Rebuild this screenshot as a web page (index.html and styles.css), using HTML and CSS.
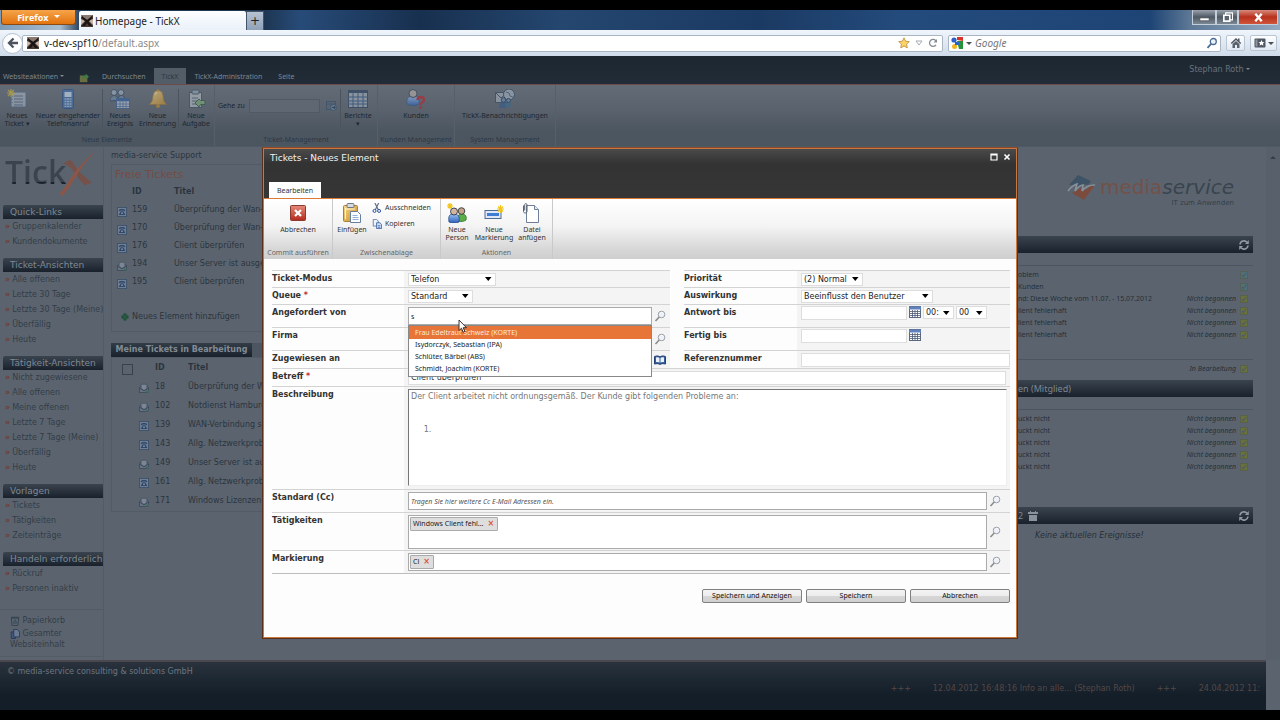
FILE: index.html
```html
<!DOCTYPE html>
<html lang="de">
<head>
<meta charset="utf-8">
<title>Homepage - TickX</title>
<link rel="stylesheet" href="styles.css">
</head>
<body>
<svg class="defs" aria-hidden="true">
  <defs>
    <linearGradient id="gGold" x1="0" y1="0" x2="1" y2="1"><stop offset="0" stop-color="#f6d888"/><stop offset="1" stop-color="#c88b26"/></linearGradient>
    <linearGradient id="gBlue" x1="0" y1="0" x2="0" y2="1"><stop offset="0" stop-color="#9cc3f2"/><stop offset="1" stop-color="#2b5fb8"/></linearGradient>
    <linearGradient id="gRed" x1="0" y1="0" x2="0" y2="1"><stop offset="0" stop-color="#e58a7c"/><stop offset="1" stop-color="#b42a1c"/></linearGradient>
  </defs>
  <symbol id="fav" viewBox="0 0 12 12"><rect width="12" height="12" fill="#4a3a34"/><path d="M0 0h12L7 5 0 2z" fill="#8a7a72"/><path d="M0 4l4 2-4 4zM12 4L8 6l4 4z" fill="#c9b5aa"/><path d="M1 1l5 4 5-4v2L7.500 6.500 11 11H8L6 8l-2 3H1l3.500-4.500L1 3z" fill="#1a1414"/></symbol>
  <symbol id="star" viewBox="0 0 12 12"><path d="M6 .8l1.6 3.4 3.7.4-2.8 2.5.8 3.8L6 9 2.700 10.900l.8-3.800L.7 4.600l3.700-.4z" fill="#fbd469" stroke="#c29345" stroke-width=".9"/></symbol>
  <symbol id="reload" viewBox="0 0 10 10"><path d="M8 6.800A3.500 3.500 0 1 1 8 3" fill="none" stroke="#858b93" stroke-width="1.300"/><path d="M9 1v3.500H5.500z" fill="#858b93"/></symbol>
  <symbol id="lens" viewBox="0 0 12 12"><circle cx="7.300" cy="4.500" r="3" fill="#eaf2fa" stroke="#4a6c94" stroke-width="1.300"/><path d="M5 7L1.500 10.800" stroke="#4a6c94" stroke-width="1.800"/></symbol>
  <symbol id="mag" viewBox="0 0 12 12"><circle cx="7.500" cy="4.500" r="3.300" fill="#eef1f8" stroke="#9aa0a8"/><path d="M9.500 3.500a2 2 0 0 0-2-1.200" fill="none" stroke="#fff"/><path d="M5.200 7L1.500 11" stroke="#8b8b8b" stroke-width="1.600"/></symbol>
  <symbol id="home" viewBox="0 0 12 12"><path d="M6 1L.8 6l1 .9L6 3l4.200 3.900 1-.9-1.700-1.600V1.600H8v1.300z" fill="#4d545e"/><path d="M2.500 7L6 3.900 9.500 7v4H7V8H5v3H2.500z" fill="#5b636e"/></symbol>
  <symbol id="marks" viewBox="0 0 12 12"><rect x=".5" y="1.500" width="11" height="9" rx="1" fill="#4f5763"/><rect x="1.500" y="2.500" width="2" height="7" fill="#8b94a0"/><path d="M7.500 3l.9 2 2.100.2-1.600 1.400.5 2.100-1.900-1.100-1.900 1.100.5-2.100-1.600-1.400 2.100-.2z" fill="#fff"/></symbol>
  <symbol id="newticket" viewBox="0 0 20 20"><rect x="4" y="3" width="15" height="15" fill="#aab4c0" stroke="#4d6788"/><path d="M7 7h9M7 10h9M7 13h9M7 16h9" stroke="#4d6788"/><path d="M5 7v1M5 10v1M5 13v1" stroke="#38679f"/><path d="M4 0v8M0 4h8M1 1l6 6M7 1L1 7" stroke="#d0b63a" stroke-width="1.200"/></symbol>
  <symbol id="mobile" viewBox="0 0 20 20"><rect x="4.500" y=".5" width="11" height="19" rx="1" fill="#3f6fae" stroke="#274f87"/><rect x="6.500" y="3" width="7" height="5" fill="#cfe2f7"/><path d="M6.500 10h7M6.500 12.500h7M6.500 15h7M6.500 17.300h7" stroke="#a8c4e6" stroke-width="1.300" stroke-dasharray="2 .5"/></symbol>
  <symbol id="event" viewBox="0 0 20 20"><circle cx="4" cy="3.500" r="3" fill="#9fb0c4" stroke="#30445e"/><circle cx="11" cy="3.500" r="3" fill="#9fb0c4" stroke="#30445e"/><path d="M0 12c0-7 8-7 8-1 0-6 7-6 7 0z" fill="#6f88a5" stroke="#30445e"/><rect x="6.500" y="9.500" width="13" height="10" fill="#bec8d3" stroke="#3b6299"/><path d="M6.500 11h13" stroke="#2f62a5" stroke-width="2.500"/><path d="M7 15h12M7 17.500h12M10 12v7M13 12v7M16 12v7" stroke="#4d70ac" stroke-width=".8"/></symbol>
  <symbol id="bell" viewBox="0 0 20 20"><path d="M10 1.500c-5 0-5 5-5.500 9-.3 2-1.500 3-3 5h17c-1.500-2-2.700-3-3-5-.5-4-.5-9-5.500-9z" fill="url(#gGold)" stroke="#a3782f" stroke-width=".8"/><circle cx="10" cy="17" r="2" fill="#c28b2d"/><circle cx="10" cy="1.500" r="1.300" fill="#c28b2d"/><path d="M7 6c.5-2 1.500-2.500 2.500-2.500" stroke="#fdf0c8" fill="none"/></symbol>
  <symbol id="task" viewBox="0 0 20 20"><rect x="3.500" y="3.500" width="12" height="15" fill="#b6bdc5" stroke="#3c5164"/><rect x="6" y="1" width="7" height="4" rx="1" fill="#97a7b6" stroke="#3c5164"/><path d="M6 9h6M6 12h5M6 15h4" stroke="#4d6174"/><path d="M9 14l4 4 1.500-2.500h4.500v-4h-4.500L13 10z" fill="#7fae7c" stroke="#325c3c"/></symbol>
  <symbol id="goto" viewBox="0 0 12 12"><rect x=".5" y="1.500" width="9" height="8" fill="none" stroke="#40566f"/><path d="M.5 4h9" stroke="#40566f"/><circle cx="7.500" cy="7.500" r="3" fill="#69798c" stroke="#40566f"/><path d="M6 7.500h3M7.800 6l1.500 1.500L7.800 9" stroke="#34465c" fill="none"/></symbol>
  <symbol id="grid" viewBox="0 0 20 20"><rect x=".5" y="1.500" width="19" height="17" fill="#a8b0b9" stroke="#293f5e"/><path d="M.5 3h19" stroke="#293f5e" stroke-width="2"/><path d="M5 3v15M10 3v15M15 3v15M0 8h20M0 12h20M0 15h20" stroke="#2d5589"/></symbol>
  <symbol id="kunde" viewBox="0 0 20 20"><path d="M1 15c-1-7 3-8 6-8s7 1 6 8c-3 2-9 2-12 0z" fill="url(#gBlue)" stroke="#2d5183" stroke-width=".7"/><circle cx="7" cy="4.500" r="4" fill="#b9b0ab" stroke="#2b3d57"/><path d="M11.500 11c0-4 6.500-4 6.500 0 0 3-3.500 2-3.500 5" fill="none" stroke="#c2212d" stroke-width="2.300"/><circle cx="14.500" cy="18.500" r="1.400" fill="#c2212d"/></symbol>
  <symbol id="notif" viewBox="0 0 20 20"><rect x=".5" y="3.500" width="12" height="10" fill="#a5afba" stroke="#35485f"/><path d="M.5 3.500L6 9l6-5.500" fill="none" stroke="#35485f"/><circle cx="14" cy="5.500" r="5.500" fill="#a5b2c0" stroke="#26415e"/><path d="M11 3l3 1 1 3 3 1" fill="none" stroke="#46617e"/><path d="M4 19c0-5 2-6 4-6s4 1 4 6z" fill="#335b8c"/><circle cx="8.500" cy="11" r="2.300" fill="#6e8eb3" stroke="#1e3c60"/><path d="M10 18c0-4 1.500-5 3.500-5s3.500 1 3.500 5z" fill="#3e6b8a"/><circle cx="13.500" cy="11.500" r="2" fill="#6e8eb3" stroke="#1e3c60"/></symbol>
  <symbol id="cancel" viewBox="0 0 20 20"><rect x="2.500" y="2.500" width="15" height="15" rx="1" fill="url(#gRed)" stroke="#8a3b31"/><path d="M7 7l6 6M13 7l-6 6" stroke="#fff" stroke-width="2.200"/></symbol>
  <symbol id="paste" viewBox="0 0 20 20"><rect x="1.500" y="2.500" width="14" height="16" rx="1" fill="url(#gGold)" stroke="#ad812b"/><rect x="5" y=".5" width="7" height="4" rx="1" fill="#d8dce2" stroke="#707784"/><path d="M3.500 5v11M3 6h10" stroke="#fff5d5"/><path d="M8.500 8.500h7l3 3v8h-10z" fill="#fff" stroke="#66809f"/><path d="M10.500 12.500h5M10.500 14.500h6M10.500 16.500h6" stroke="#8fb0d8"/></symbol>
  <symbol id="cut" viewBox="0 0 12 12"><path d="M3.500 0l4 8M8 0L4 8" stroke="#5f6f86" stroke-width="1.400"/><circle cx="3" cy="9.500" r="1.800" fill="none" stroke="#27519a" stroke-width="1.200"/><circle cx="8.500" cy="9.500" r="1.800" fill="none" stroke="#27519a" stroke-width="1.200"/></symbol>
  <symbol id="copy" viewBox="0 0 12 12"><path d="M1.500.5h4l2 2v6h-6z" fill="#eef4fc" stroke="#5572a0"/><path d="M5.500 4.500h4l2 2v5h-6z" fill="#cfe0f6" stroke="#3b5f9b"/><path d="M7 8h3M7 10h3" stroke="#3b6ec0"/></symbol>
  <symbol id="person" viewBox="0 0 20 20"><path d="M11 18c-1-6 1-7 4-7s5 2 4 6c-2 1.500-5 2-8 1z" fill="#5cae47" stroke="#2c6e28" stroke-width=".8"/><circle cx="14.500" cy="8" r="3.300" fill="#c9a088" stroke="#3e4b43"/><path d="M2 19c-1-7 1-8 5-8s6 2 5 8c-3 1.300-7 1.300-10 0z" fill="url(#gBlue)" stroke="#23488a" stroke-width=".8"/><circle cx="7" cy="8.500" r="3.500" fill="#d7b49d" stroke="#39475d"/><path d="M3 0v6M0 3h6M1 1l4 4M5 1L1 5" stroke="#f0c419" stroke-width="1.200"/></symbol>
  <symbol id="marking" viewBox="0 0 20 20"><rect x="1" y="7.500" width="16" height="8" fill="#dfe8f4" stroke="#4f6c93"/><rect x="3" y="10" width="12" height="3" fill="#3e7dd6"/><path d="M16.500 2v8M13 6h7M14 3.500l5 5M19 3.500l-5 5" stroke="#f0c419" stroke-width="1.200"/></symbol>
  <symbol id="file" viewBox="0 0 20 20"><path d="M4.500 2.500h8l4 4v13h-12z" fill="#fff" stroke="#6f809b"/><path d="M12.500 2.500v4h4" fill="#e1e9f4" stroke="#6f809b"/><path d="M1.500 2.500v6c0 2 3.500 2 3.500 0V2c0-2-2.300-2-2.300 0v5.500" fill="none" stroke="#58606b"/></symbol>
  <symbol id="rphone" viewBox="0 0 12 12"><rect x=".5" y=".5" width="11" height="11" fill="#77889d" stroke="#31486a"/><path d="M2 4c1-2 7-2 8 0l-1 1.200-1.500-1h-3L3 5.200z" fill="#203e6b"/><path d="M4.500 5h3L10 9.500H2z" fill="#203e6b"/><circle cx="6" cy="7.400" r="1.100" fill="#8fa2bb"/></symbol>
  <symbol id="rmail" viewBox="0 0 12 12"><path d="M.5 5.500L3 3.500h6l2.500 2v6H.5z" fill="#6b7988" stroke="#2c3c54"/><path d="M2.500 1.500h7v5L6 9 2.500 6.500z" fill="#87929e" stroke="#34445a" stroke-width=".8"/><path d="M.5 6L6 9.500 11.500 6" fill="none" stroke="#2c3c54"/><path d="M8 9h4v2.500H8z" fill="#3f6a5f"/></symbol>
  <symbol id="cal" viewBox="0 0 12 12"><rect x=".5" y=".5" width="11" height="11" fill="#fff" stroke="#5b6a80"/><path d="M0 2h12" stroke="#5f82bd" stroke-width="3"/><path d="M1 5.500h10M1 7.500h10M1 9.500h10M3.500 4v7.500M6 4v7.500M8.500 4v7.500" stroke="#4a5a73" stroke-width=".8"/></symbol>
  <symbol id="book" viewBox="0 0 12 12"><path d="M.5 2.500C3 1.500 5 2 6 3c1-1 3-1.500 5.500-.5v7.500C9 9.500 7 9.500 6 10.500 5 9.500 3 9.500.5 10z" fill="#355e9d" stroke="#1f3e72"/><path d="M2 3.500c1.500-.5 3 0 3.500.5v4.500c-1-.7-2.500-.7-3.500-.5zM10 3.500c-1.500-.5-3 0-3.500.5v4.500c1-.7 2.500-.7 3.500-.5z" fill="#e9f1fb"/></symbol>
  <symbol id="bin" viewBox="0 0 12 12"><path d="M1.500 2.500h9l-1 9h-7z" fill="none" stroke="#2f3c4a"/><path d="M1 1.500h10" stroke="#2f3c4a"/><path d="M6 4.500L8 8.500H4z" fill="none" stroke="#2f4a5c"/></symbol>
  <symbol id="docs" viewBox="0 0 12 12"><path d="M1.500 3.500h5v8h-5z" fill="#44597a" stroke="#22355a"/><path d="M4.500.5h4l3 3v6h-7z" fill="#6a7a92" stroke="#22355a"/></symbol>
  <symbol id="sync" viewBox="0 0 12 12"><path d="M2 5.500A4 4 0 0 1 9 3.300M10 6.500A4 4 0 0 1 3 8.700" fill="none" stroke="#929aa3" stroke-width="1.600"/><path d="M10.800 1v4H7zM1.200 11V7H5z" fill="#929aa3"/></symbol>
  <symbol id="done" viewBox="0 0 10 10"><rect x=".5" y=".5" width="9" height="9" fill="currentColor" stroke="#56604d"/><path d="M2.500 5l1.500 2L8 2.500" fill="none" stroke="#4f5966" stroke-width="1.300"/></symbol>
  <symbol id="edit" viewBox="0 0 12 12"><rect x="1" y="3" width="9" height="8" fill="#8a8a45"/><path d="M3 8c0-4 3-5 5-5V1l4 3.500L8 8V5.500c-2 0-3 1-5 2.500z" fill="#4f9a4d"/></symbol>
  <symbol id="plus" viewBox="0 0 10 10"><path d="M3.500 1h3v2.500H9v3H6.500V9h-3V6.500H1v-3h2.500z" fill="#245a3f" stroke="#1b4434" stroke-width=".7"/></symbol>
  <symbol id="arrow" viewBox="0 0 8 8"><path d="M1 2h6.500L4.250 6z" fill="#000"/></symbol>
</svg>

<header class="browser">
  <div class="titlebar">
    <button class="firefox" type="button">Firefox <span class="caret"></span></button>
    <div class="tab"><svg class="i12"><use href="#fav"/></svg>Homepage - TickX</div>
    <button class="newtab" type="button" aria-label="Neuer Tab">+</button>
    <div class="winbtns">
      <button type="button" class="min" aria-label="Minimieren"><svg viewBox="0 0 12 12"><path d="M1 6.500h10v3H1z" fill="#fff" stroke="#4a5058" stroke-width=".7"/></svg></button>
      <button type="button" class="max" aria-label="Wiederherstellen"><svg viewBox="0 0 12 12"><path d="M4 1h7.500v7.500H4z" fill="none" stroke="#fff" stroke-width="1.300"/><path d="M2 3.500h6.500V10H2z" fill="#5b636e" stroke="#fff" stroke-width="1.800"/></svg></button>
      <button type="button" class="close" aria-label="Schließen"><svg viewBox="0 0 12 12"><path d="M2.500 2l7 8M9.500 2l-7 8" stroke="#fff" stroke-width="2.600"/></svg></button>
    </div>
  </div>
  <div class="navbar">
    <button class="back" type="button" aria-label="Zurück"><svg viewBox="0 0 14 14"><path d="M7.500 2.500L3 7l4.500 4.500M3.500 7H12" fill="none" stroke="#4b525c" stroke-width="2.300"/></svg></button>
    <div class="url" role="textbox" aria-label="Adresse">
      <svg class="i12"><use href="#fav"/></svg>
      <span class="addr">v-dev-spf10<span class="path">/default.aspx</span></span>
      <svg class="i12"><use href="#star"/></svg>
      <svg class="i8"><path d="M1 2h6L4 6z" fill="none" stroke="#a6abb2"/></svg>
      <svg class="i10"><use href="#reload"/></svg>
    </div>
    <div class="search">
      <svg class="i12" viewBox="0 0 12 12"><rect width="12" height="12" fill="#fff"/><path d="M6 0h6v4L6 3z" fill="#d9342b"/><path d="M6 4h6v8H8z" fill="#26913d"/><circle cx="3" cy="3" r="2.600" fill="#2b61c8"/><circle cx="3.500" cy="9.500" r="2.500" fill="#f0b51e"/><path d="M4 5h4v3H4z" fill="#2b61c8"/></svg>
      <span class="caret dark"></span>
      <input type="text" placeholder="Google" aria-label="Suche">
      <svg class="i12"><use href="#lens"/></svg>
    </div>
    <button class="tool" type="button" aria-label="Startseite"><svg class="i12"><use href="#home"/></svg></button>
    <button class="tool wide" type="button" aria-label="Lesezeichen"><svg class="i12"><use href="#marks"/></svg><span class="caret dark"></span></button>
  </div>
</header>

<div class="page">
  <div class="topbar">
    <button class="siteact" type="button">Websiteaktionen <span class="caret dim"></span></button>
    <svg class="i12"><use href="#edit"/></svg>
    <nav class="tabs"><a href="#">Durchsuchen</a><a href="#" class="on">TickX</a><a href="#">TickX-Administration</a><a href="#">Seite</a></nav>
    <button class="user" type="button">Stephan Roth <span class="caret dim"></span></button>
  </div>

  <div class="ribbon">
    <section class="group g1">
      <div class="tools">
        <button type="button" class="w34"><svg class="i20"><use href="#newticket"/></svg>Neues<br>Ticket ▾</button>
        <button type="button" class="w68 sep"><svg class="i20"><use href="#mobile"/></svg>Neuer eingehender<br>Telefonanruf</button>
        <button type="button" class="w34"><svg class="i20"><use href="#event"/></svg>Neues<br>Ereignis</button>
        <button type="button" class="w42 sep"><svg class="i20"><use href="#bell"/></svg>Neue<br>Erinnerung</button>
        <button type="button" class="w34"><svg class="i20"><use href="#task"/></svg>Neue<br>Aufgabe</button>
      </div>
      <h2>Neue Elemente</h2>
    </section>
    <section class="group g2">
      <div class="tools">
        <div class="goto sep"><label for="goto-id">Gehe zu</label><input id="goto-id" type="text"><svg class="i12"><use href="#goto"/></svg></div>
        <button type="button" class="w34"><svg class="i20"><use href="#grid"/></svg>Berichte<br>▾</button>
      </div>
      <h2>Ticket-Management</h2>
    </section>
    <section class="group g3">
      <div class="tools"><button type="button" class="w34"><svg class="i20"><use href="#kunde"/></svg>Kunden</button></div>
      <h2>Kunden Management</h2>
    </section>
    <section class="group g4">
      <div class="tools"><button type="button" class="w92"><svg class="i20"><use href="#notif"/></svg>TickX-Benachrichtigungen</button></div>
      <h2>System Management</h2>
    </section>
  </div>

  <div class="site">
    <nav class="side">
      <a class="tickx" href="#" aria-label="TickX"><span>Tick</span><svg viewBox="0 0 38 48"><path d="M11 9c3 3 5 7 8 11 5 5 9 9 15 13l-8 3c-4-4-7-8-10-13-4-5-8-9-13-10z" fill="#75514a"/><path d="M37 0c-5 7-11 12-15 19C16 28 11 38 3 47l-4-2c6-5 9-12 13-18C18 18 28 8 37 0z" fill="#8a564a"/></svg></a>
      <h3>Quick-Links</h3>
      <ul><li><a href="#">Gruppenkalender</a></li><li><a href="#">Kundendokumente</a></li></ul>
      <h3>Ticket-Ansichten</h3>
      <ul><li><a href="#">Alle offenen</a></li><li><a href="#">Letzte 30 Tage</a></li><li><a href="#">Letzte 30 Tage (Meine)</a></li><li><a href="#">Überfällig</a></li><li><a href="#">Heute</a></li></ul>
      <h3>Tätigkeit-Ansichten</h3>
      <ul><li><a href="#">Nicht zugewiesene</a></li><li><a href="#">Alle offenen</a></li><li><a href="#">Meine offenen</a></li><li><a href="#">Letzte 7 Tage</a></li><li><a href="#">Letzte 7 Tage (Meine)</a></li><li><a href="#">Überfällig</a></li><li><a href="#">Heute</a></li></ul>
      <h3>Vorlagen</h3>
      <ul><li><a href="#">Tickets</a></li><li><a href="#">Tätigkeiten</a></li><li><a href="#">Zeiteinträge</a></li></ul>
      <h3>Handeln erforderlich</h3>
      <ul><li><a href="#">Rückruf</a></li><li><a href="#">Personen inaktiv</a></li></ul>
      <div class="extra">
        <a href="#"><svg class="i10"><use href="#bin"/></svg> Papierkorb</a>
        <a href="#"><svg class="i10"><use href="#docs"/></svg> Gesamter<br>Websiteinhalt</a>
      </div>
    </nav>

    <main class="center">
      <p class="crumb">media-service Support</p>
      <section class="panel free">
        <h2>Freie Tickets</h2>
        <table>
          <tr><th></th><th>ID</th><th>Titel</th></tr>
          <tr><td><svg class="i10"><use href="#rphone"/></svg></td><td>159</td><td>Überprüfung der Wan-S</td></tr>
          <tr><td><svg class="i10"><use href="#rphone"/></svg></td><td>170</td><td>Überprüfung der Wan-S</td></tr>
          <tr><td><svg class="i10"><use href="#rphone"/></svg></td><td>176</td><td>Client überprüfen</td></tr>
          <tr><td><svg class="i10"><use href="#rmail"/></svg></td><td>194</td><td>Unser Server ist ausge</td></tr>
          <tr><td><svg class="i10"><use href="#rphone"/></svg></td><td>195</td><td>Client überprüfen</td></tr>
        </table>
        <a class="add" href="#"><svg class="i8"><use href="#plus"/></svg> Neues Element hinzufügen</a>
      </section>
      <div class="ptabs"><button type="button" class="ptab">Meine Tickets in Bearbeitung</button><span class="ptab off"></span></div>
      <section class="panel mine">
        <table>
          <tr><th><input type="checkbox" aria-label="Alle auswählen"></th><th></th><th>ID</th><th>Titel</th></tr>
          <tr><td></td><td><svg class="i10"><use href="#rmail"/></svg></td><td>18</td><td>Überprüfung der Wa</td></tr>
          <tr><td></td><td><svg class="i10"><use href="#rmail"/></svg></td><td>102</td><td>Notdienst Hamburg</td></tr>
          <tr><td></td><td><svg class="i10"><use href="#rphone"/></svg></td><td>139</td><td>WAN-Verbindung so</td></tr>
          <tr><td></td><td><svg class="i10"><use href="#rphone"/></svg></td><td>143</td><td>Allg. Netzwerkprobl</td></tr>
          <tr><td></td><td><svg class="i10"><use href="#rmail"/></svg></td><td>149</td><td>Unser Server ist au</td></tr>
          <tr><td></td><td><svg class="i10"><use href="#rphone"/></svg></td><td>161</td><td>Allg. Netzwerkprobl</td></tr>
          <tr><td></td><td><svg class="i10"><use href="#rmail"/></svg></td><td>171</td><td>Windows Lizenzen</td></tr>
        </table>
      </section>
    </main>

    <aside class="right">
      <div class="brand">
        <svg viewBox="0 0 30 26"><path d="M2 10L11 0l13 6-3 4-5-1-4 4-4-3z" fill="#3e5365"/><path d="M5 18l5-3 5-3 4 3 4-4 5-1-11 15z" fill="#7b4b3e"/><path d="M1 16c3-4 6-6 9-7l-2 7c3-4 5-6 8-6l-1 6c3-4 6-6 13-6" fill="none" stroke="#87919b" stroke-width="1.600"/></svg>
        <div><span class="name"><span>media</span><em>service</em></span><small>IT zum Anwenden</small></div>
      </div>
      <div class="bar"><span></span><svg class="i12"><use href="#sync"/></svg></div>
      <ul class="tasks">
        <li><span>oblem</span><svg class="i8 teal"><use href="#done"/></svg></li>
        <li><span>Kunden</span><svg class="i8 teal"><use href="#done"/></svg></li>
        <li><span>nd: Diese Woche vom 11.07. - 15.07.2012</span><em>Nicht begonnen</em><svg class="i8"><use href="#done"/></svg></li>
        <li><span>lient fehlerhaft</span><em>Nicht begonnen</em><svg class="i8"><use href="#done"/></svg></li>
        <li><span>lient fehlerhaft</span><em>Nicht begonnen</em><svg class="i8"><use href="#done"/></svg></li>
        <li><span>lient fehlerhaft</span><em>Nicht begonnen</em><svg class="i8"><use href="#done"/></svg></li>
      </ul>
      <ul class="tasks single"><li><span></span><em>In Bearbeitung</em><svg class="i8"><use href="#done"/></svg></li></ul>
      <div class="bar"><span>en (Mitglied)</span></div>
      <ul class="tasks">
        <li><span>uckt nicht</span><em>Nicht begonnen</em><svg class="i8"><use href="#done"/></svg></li>
        <li><span>uckt nicht</span><em>Nicht begonnen</em><svg class="i8"><use href="#done"/></svg></li>
        <li><span>uckt nicht</span><em>Nicht begonnen</em><svg class="i8"><use href="#done"/></svg></li>
        <li><span>uckt nicht</span><em>Nicht begonnen</em><svg class="i8"><use href="#done"/></svg></li>
        <li><span>uckt nicht</span><em>Nicht begonnen</em><svg class="i8"><use href="#done"/></svg></li>
      </ul>
      <div class="bar last"><span>2 <svg class="i10" viewBox="0 0 10 10"><path d="M0 1h2V0h1v1h4V0h1v1h2v2H0zM1 4h8v6H1z" fill="#8a929b"/></svg></span><svg class="i12"><use href="#sync"/></svg></div>
      <p class="none">Keine aktuellen Ereignisse!</p>
    </aside>
    <div class="scroll"><span class="caret up"></span></div>
  </div>

  <footer class="foot">
    <p>© media-service consulting &amp; solutions GmbH</p>
    <p class="ticker"><span>+++</span><span>12.04.2012 16:48:16 Info an alle... (Stephan Roth)</span><span>+++</span><span>24.04.2012 11:</span></p>
  </footer>

  <div class="overlay">
    <div class="dialog" role="dialog" aria-labelledby="dlg-title">
      <div class="dhead">
        <div class="dtitle"><h1 id="dlg-title">Tickets - Neues Element</h1>
          <button type="button" aria-label="Maximieren"><svg class="i8"><path d="M1 1h6v6H1zM1 2h6" fill="none" stroke="#fff" stroke-width="1.200"/></svg></button>
          <button type="button" aria-label="Schließen"><svg class="i8"><path d="M1.500 1.500l5 5M6.500 1.500l-5 5" stroke="#fff" stroke-width="1.600"/></svg></button></div>
        <button type="button" class="dtab">Bearbeiten</button>
      </div>
      <div class="dribbon">
        <section class="group d1">
          <div class="tools"><button type="button" class="w42"><svg class="i20"><use href="#cancel"/></svg>Abbrechen</button></div>
          <h2>Commit ausführen</h2>
        </section>
        <section class="group d2">
          <div class="tools">
            <button type="button" class="w34"><svg class="i20"><use href="#paste"/></svg>Einfügen</button>
            <div class="pair"><button type="button"><svg class="i10"><use href="#cut"/></svg>Ausschneiden</button><button type="button"><svg class="i10"><use href="#copy"/></svg>Kopieren</button></div>
          </div>
          <h2>Zwischenablage</h2>
        </section>
        <section class="group d3">
          <div class="tools">
            <button type="button" class="w30"><svg class="i20"><use href="#person"/></svg>Neue<br>Person</button>
            <button type="button" class="w42"><svg class="i20"><use href="#marking"/></svg>Neue<br>Markierung</button>
            <button type="button" class="w34"><svg class="i20"><use href="#file"/></svg>Datei<br>anfügen</button>
          </div>
          <h2>Aktionen</h2>
        </section>
      </div>

      <form class="form">
        <div class="cols">
          <div class="col">
            <div class="row r17"><label for="modus">Ticket-Modus</label><div class="field"><span class="sel s88"><select id="modus"><option>Telefon</option></select><svg class="i8"><use href="#arrow"/></svg></span></div></div>
            <div class="row r17"><label for="queue">Queue <b>*</b></label><div class="field"><span class="sel s65"><select id="queue"><option>Standard</option></select><svg class="i8"><use href="#arrow"/></svg></span></div></div>
            <div class="row r23"><label for="von">Angefordert von</label><div class="field">
              <div class="combo"><input id="von" class="box" type="text" value="s">
                <ul class="menu" role="listbox"><li class="hot" role="option">Frau Edeltraut Schweiz (KORTE)</li><li role="option">Isydorczyk, Sebastian (IPA)</li><li role="option">Schlüter, Bärbel (ABS)</li><li role="option">Schmidt, Joachim (KORTE)</li></ul>
                <svg class="cursor" viewBox="0 0 9 14"><path d="M1 1v10.500l2.500-2.300 1.700 4 1.700-.8-1.700-3.700h3.300z" fill="#fff" stroke="#222" stroke-width=".9"/></svg>
              </div><svg class="i12"><use href="#mag"/></svg></div></div>
            <div class="row r23"><label for="firma">Firma</label><div class="field"><input id="firma" class="box" type="text"><svg class="i12"><use href="#mag"/></svg></div></div>
            <div class="row r18"><label for="zug">Zugewiesen an</label><div class="field"><input id="zug" class="line" type="text"><svg class="i12"><use href="#book"/></svg></div></div>
          </div>
          <div class="col">
            <div class="row r17"><label for="prio">Priorität</label><div class="field"><span class="sel s61"><select id="prio"><option>(2) Normal</option></select><svg class="i8"><use href="#arrow"/></svg></span></div></div>
            <div class="row r17"><label for="ausw">Auswirkung</label><div class="field"><span class="sel s131"><select id="ausw"><option>Beeinflusst den Benutzer</option></select><svg class="i8"><use href="#arrow"/></svg></span></div></div>
            <div class="row r23"><label for="antw">Antwort bis</label><div class="field top"><input id="antw" class="line date" type="text"><svg class="i12"><use href="#cal"/></svg><span class="sel s31"><select aria-label="Stunde"><option>00:</option></select><svg class="i8"><use href="#arrow"/></svg></span><span class="sel s31"><select aria-label="Minute"><option>00</option></select><svg class="i8"><use href="#arrow"/></svg></span></div></div>
            <div class="row r23"><label for="fertig">Fertig bis</label><div class="field top"><input id="fertig" class="line date" type="text"><svg class="i12"><use href="#cal"/></svg></div></div>
            <div class="row r18"><label for="ref">Referenznummer</label><div class="field wide"><input id="ref" class="line" type="text"></div></div>
          </div>
        </div>
        <div class="row r18"><label for="betreff">Betreff <b>*</b></label><div class="field"><input id="betreff" class="line" type="text" value="Client überprüfen"></div></div>
        <div class="row tall"><label for="beschr">Beschreibung</label><div class="field"><textarea id="beschr">Der Client arbeitet nicht ordnungsgemäß. Der Kunde gibt folgenden Probleme an:


     1.</textarea></div></div>
        <div class="row r23"><label for="cc">Standard (Cc)</label><div class="field"><input id="cc" class="box" type="text" placeholder="Tragen Sie hier weitere Cc E-Mail Adressen ein."><svg class="i12"><use href="#mag"/></svg></div></div>
        <div class="row r38"><label for="taet">Tätigkeiten</label><div class="field"><div class="box chips"><span class="chip">Windows Client fehl... <button type="button" aria-label="Entfernen">×</button></span><input id="taet" type="text"></div><svg class="i12"><use href="#mag"/></svg></div></div>
        <div class="row r23 end"><label for="mark">Markierung</label><div class="field"><div class="box chips"><span class="chip">Cl <button type="button" aria-label="Entfernen">×</button></span><input id="mark" type="text"></div><svg class="i12"><use href="#mag"/></svg></div></div>
        <div class="actions"><button type="button">Speichern und Anzeigen</button><button type="button">Speichern</button><button type="button">Abbrechen</button></div>
      </form>
    </div>
  </div>
</div>
</body>
</html>
```
FILE: styles.css
```css
* { box-sizing: border-box; }
body {
  margin: 0;
  min-height: 100vh;
  padding: 10px 0;
  display: flex;
  flex-direction: column;
  background: #000;
  font: 8px/10px "DejaVu Sans", Verdana, sans-serif;
  color: #2c343e;
}
button, input, select, textarea { font: inherit; color: inherit; margin: 0; padding: 0; border: 0; background: none; }
ul, h1, h2, h3, p { margin: 0; padding: 0; font-weight: normal; font-size: inherit; list-style: none; }
a { color: inherit; text-decoration: none; }
svg { flex: none; display: block; }
.defs { position: absolute; width: 0; height: 0; }
.i8 { width: 8px; height: 8px; }
.i10 { width: 10px; height: 10px; }
.i12 { width: 12px; height: 12px; }
.i20 { width: 20px; height: 20px; }
.caret { display: inline-block; border: 3px solid transparent; border-top-color: #fff; border-bottom: 0; }
.caret.dark { border-width: 3px 3px 0; border-top-color: #4a4f57; }
.caret.dim { border-width: 2px 2px 0; border-top-color: #808890; vertical-align: 2px; }
.caret.up { border: 3px solid transparent; border-bottom-color: #353e48; border-top: 0; }

/* Browser frame */
.titlebar {
  display: flex;
  height: 20px;
  padding-left: 1px;
  background: linear-gradient(90deg, #7f9cb8 0, #a8bccf 60px, #27405c 80px, #1d3550 262px, #274b78 300px, #18304f 420px, #24466f 560px, #1b3a63 760px, #234b7c 900px, #1d4474 1150px, #5d7896 1190px, #93a9bf 100%);
}
.firefox {
  width: 75px;
  height: 15px;
  border: 1px solid #8a4a12;
  border-top: 0;
  border-radius: 0 0 3px 3px;
  background: linear-gradient(#f6a44a, #e2730f);
  color: #fff;
  font: bold 9px/13px "Open Sans", sans-serif;
}
.firefox .caret { margin-left: 3px; vertical-align: 3px; }
.tab {
  display: flex;
  align-items: center;
  gap: 2px;
  width: 167px;
  margin: 1px 0 0 3px;
  padding: 0 2px;
  border-radius: 2px 2px 0 0;
  background: linear-gradient(#fdfeff, #eaf1fa);
  color: #222;
  font: 10px/18px "Noto Sans", sans-serif;
}
.newtab { width: 18px; margin-top: 1px; border: 1px solid #43536a; border-bottom: 0; background: linear-gradient(#b5c2d2, #8fa2b8); color: #222; font: 12px/16px "DejaVu Sans", sans-serif; }
.winbtns { display: flex; margin-left: auto; margin-right: 2px; height: 15px; }
.winbtns button { width: 24px; border: 1px solid #c4ced8; border-top: 0; background: linear-gradient(#9aa3ad, #4f5963 50%, #7c8894); display: flex; justify-content: center; align-items: center; }
.winbtns svg { width: 11px; height: 11px; }
.winbtns .max { width: 22px; }
.winbtns .close { width: 40px; background: linear-gradient(#d68a7c, #b8301c 50%, #d0563a); }
.navbar {
  display: flex;
  align-items: center;
  gap: 5px;
  height: 26px;
  padding: 0 3px 0 2px;
  background: linear-gradient(#f0f5fb, #cfdbea);
}
.back { width: 21px; height: 21px; border: 1px solid #b3bfcd; border-radius: 50%; background: #fcfdfe; display: flex; align-items: center; justify-content: center; margin-right: -6px; }
.back svg { width: 14px; height: 14px; }
.url, .search { display: flex; align-items: center; height: 17px; border: 1px solid #a9b5c3; background: #fff; border-radius: 2px; }
.url { flex: 1; gap: 5px; padding: 0 4px; font: 10px/14px "Noto Sans", sans-serif; color: #1d1d1d; }
.addr { flex: 1; }
.path { color: #8a8a8a; }
.search { width: 273px; gap: 3px; padding: 0 2px; }
.search input { flex: 1; min-width: 0; font: italic 10px/14px "Noto Sans", sans-serif; }
.search input::placeholder { color: #777; opacity: 1; }
.tool { width: 19px; height: 16px; border: 1px solid #bac5d2; border-radius: 2px; background: linear-gradient(#fdfeff, #e1e9f3); display: flex; align-items: center; justify-content: center; gap: 2px; }
.tool.wide { width: 27px; }

/* Site chrome */
.page { position: relative; flex: 1; display: flex; flex-direction: column; background: #5b646e; }
.topbar { display: flex; align-items: flex-end; height: 29px; border-bottom: 1px solid #6c4b4c; background: linear-gradient(#1d2730, #222c38); color: #7d8791; font: 7px/12px "Noto Sans", sans-serif; padding-left: 3px; }
.siteact { height: 14px; width: 67px; text-align: left; margin-right: 8px; font: 7px/14px "Noto Sans", sans-serif; white-space: nowrap; }
.topbar > .i12 { opacity: .7; width: 10px; margin: 0 1px; }
.tabs { display: flex; align-items: flex-end; }
.tabs a { padding: 0 8px; height: 13px; }
.tabs a:first-child { margin-left: 4px; }
.tabs .on { background: #535d68; color: #2d3640; height: 16px; padding-top: 3px; }
.user { align-self: flex-start; margin: 8px 30px 0 auto; color: #68727c; font: 8px/12px "DejaVu Sans", sans-serif; }
.ribbon { display: flex; height: 62px; border-bottom: 1px solid #505964; background: linear-gradient(#636c76, #59626d 40%, #4c5661 75%, #4b5560); color: #1e2731; }
.group { display: flex; flex-direction: column; border-right: 1px solid #566069; font: 7px/8px "Noto Sans", sans-serif; }
.group h2 { margin-top: auto; line-height: 13px; text-align: center; color: #2d3843; white-space: nowrap; }
.tools { display: flex; align-items: flex-start; height: 46px; padding-top: 4px; }
.tools > button { white-space: nowrap; display: block; text-align: center; }
.tools > button .i20 { margin: 0 auto 3px; }
.tools button { font: 7px/8px "Noto Sans", sans-serif; }
.ribbon .i20 { opacity: .6; }
.sep { border-right: 1px solid #4a545f; }
.w30 { width: 32px; }
.w34 { width: 34px; }
.w42 { width: 42px; }
.w68 { width: 69px; }
.w92 { width: 100px; }
.g1 { width: 215px; }
.g2 { width: 163px; }
.g3 { width: 77px; }
.g4 { width: 101px; }
.g3 .tools { justify-content: center; }
.goto { display: flex; align-items: center; gap: 3px; width: 126px; height: 39px; padding: 0 0 5px 3px; }
.goto label { width: 28px; white-space: nowrap; }
.goto input { width: 71px; height: 14px; border: 1px solid #505a65; background: #5f6872; margin-right: 3px; }

.site { display: flex; flex: 1; }
.side { width: 104px; border-right: 1px solid #525c66; color: #333d48; }
.tickx { display: flex; height: 58px; padding: 4px 0 0 5px; }
.tickx span { font: 32px/42px "Open Sans", sans-serif; font-weight: 600; color: transparent; background: linear-gradient(#3b444e 58%, #1b232d 58%, #262f39); background-clip: text; -webkit-background-clip: text; }
.tickx svg { width: 36px; height: 46px; margin-left: -6px; }
.side h3 { height: 14px; margin-left: 3px; padding-left: 7px; border-radius: 2px 0 0 0; background: linear-gradient(#3a444f, #18212c); color: #7f8993; font-size: 9px; line-height: 14px; white-space: nowrap; }
.side ul { margin-bottom: 9px; }
.side li { height: 15px; line-height: 16px; padding-left: 5px; white-space: nowrap; }
.side li::before { content: "»"; color: #6e3d35; font-weight: bold; margin-right: 2px; }
.side .extra { margin-top: 13px; padding: 5px 0 6px 10px; border-top: 1px solid #525c66; border-bottom: 1px solid #525c66; }
.extra a { display: block; line-height: 11px; margin-bottom: 2px; }
.extra a:last-child { margin: 0; }
.extra svg { display: inline-block; vertical-align: middle; }

.center { flex: 1; min-width: 0; padding: 3px 8px 0 7px; color: #2b343e; }
.crumb { line-height: 12px; height: 14px; }
.panel { border: 1px solid #525c66; }
.free { height: 168px; margin-bottom: 11px; padding: 2px 3px; }
.free h2 { font-size: 11px; line-height: 16px; color: #744c46; }
table { border-collapse: collapse; table-layout: fixed; }
th, td { padding: 0; text-align: left; white-space: nowrap; }
td svg { opacity: .75; }
.free tr { height: 18px; }
.free th:nth-child(1) { width: 17px; }
.free th:nth-child(2) { width: 42px; }
.free td:first-child { padding: 3px 0 0 2px; }
.add { display: flex; align-items: center; gap: 3px; margin: 21px 0 0 6px; }
.ptabs { height: 14px; display: flex; }
.ptab { width: 141px; background: linear-gradient(#333d48, #18212c); color: #828b95; font-weight: bold; white-space: nowrap; }
.ptab.off { flex: 1; background: #4c5661; }
.mine { padding-bottom: 1px; }
.mine tr { height: 19px; }
.mine th:nth-child(1) { width: 26px; padding-left: 10px; }
.mine th:nth-child(2) { width: 17px; }
.mine th:nth-child(3) { width: 33px; }
.mine td:nth-child(2) { padding: 3px 0 0 1px; }
.mine input { appearance: none; width: 11px; height: 11px; border: 1px solid #38424d; display: block; margin-top: 4px; }

.right { width: 235px; margin-right: 13px; color: #262f39; font: 7px/12px "Noto Sans", sans-serif; }
.brand { display: flex; justify-content: flex-end; gap: 3px; height: 89px; padding: 28px 19px 0 0; }
.brand svg { width: 30px; height: 26px; }
.brand .name { display: block; font: 20px/24px "DejaVu Sans", sans-serif; color: #735149; }
.brand .name em { color: #38444f; }
.brand small { display: block; text-align: right; font: 7px/8px "DejaVu Sans", sans-serif; color: #343e49; }
.bar { display: flex; justify-content: space-between; align-items: center; height: 17px; padding-right: 3px; background: linear-gradient(#3a444f, #18212c); color: #7d8791; font-size: 9px; }
.bar span { display: flex; align-items: center; gap: 5px; }
.tasks { margin-top: 12px; padding-top: 3px; border-top: 1px solid #4c5660; }
.tasks li { display: flex; align-items: center; height: 12px; padding-right: 5px; gap: 4px; color: #68713a; }
.tasks li span { flex: 1; color: #262f39; white-space: nowrap; }
.tasks li em { color: #262f39; }
.tasks .teal { color: #4f7078; }
.tasks.single { margin-top: 18px; }
.single + .bar { margin-top: 5px; }
.last { margin-top: 34px; }
.none { margin: 5px 0 0 17px; font: italic 8px/14px "DejaVu Sans", sans-serif; }
.scroll { width: 14px; padding: 5px 4px; background: #58616b; }
.foot { height: 50px; margin-right: 14px; border-top: 2px solid #4b474e; background: linear-gradient(#29323d, #131e29 70%); color: #6d7680; padding: 5px 0 0 7px; }
.ticker { display: flex; gap: 22px; justify-content: flex-end; margin-top: 7px; padding-right: 6px; color: #554745; }

/* Dialog */
.overlay { position: absolute; inset: 0; padding-top: 91px; display: flex; justify-content: center; align-items: flex-start; }
.dialog { width: 756px; min-height: 492px; border: 1px solid #5c2f18; border-top: 2px solid #8a4a2c; outline: 1px solid #c9773f; outline-offset: -2px; background: #fdfdfd; color: #333; }
.dhead { height: 50px; padding: 0 6px; border-bottom: 1px solid #dd7a38; background: linear-gradient(#4a4a4a, #333 30%, #363636); display: flex; flex-direction: column; justify-content: space-between; align-items: flex-start; }
.dtitle { display: flex; align-items: center; gap: 5px; align-self: stretch; height: 16px; padding-left: 1px; }
.dtitle h1 { flex: 1; font-size: 9px; line-height: 12px; padding-top: 2px; color: #f2f2f2; }
.dtab { width: 52px; height: 16px; padding-top: 2px; background: #fff; font: 7px/14px "Noto Sans", sans-serif; color: #333; }
.dribbon { display: flex; height: 60px; margin: 0 1px; background: linear-gradient(#fff, #f4f4f4 45%, #d6d6d6 85%, #cfcfcf); color: #333; }
.dribbon .group { border-color: #c9c9c9; }
.dribbon .group h2 { color: #666; }
.d1 { width: 69px; }
.d2 { width: 108px; }
.d3 { width: 112px; }
.d1 .tools { justify-content: center; }
.d2 .tools { padding-left: 2px; }
.pair { display: flex; flex-direction: column; gap: 6px; padding-left: 3px; }
.pair button { display: flex; align-items: center; gap: 3px; height: 10px; }
.form { padding: 11px 7px 0 9px; }
.cols { display: grid; grid-template-columns: 398px 1fr; gap: 14px; }
.row { display: grid; grid-template-columns: 132px 1fr; border-top: 1px solid #d3d3d3; }
.col + .col .row { grid-template-columns: 113px 1fr; }
.row > label { font-weight: bold; padding-top: 2px; line-height: 11px; }
.row b { color: #c8321f; }
.field { display: flex; align-items: center; gap: 2px; padding: 1px 4px; background: #f4f4f4; }
.field.top { align-items: flex-start; }
.field.wide { padding-right: 0; }
.r17 { height: 17px; }
.r18 { height: 18px; }
.r23 { height: 23px; }
.r38 { height: 38px; }
.tall { height: 103px; }
.end { height: 24px; border-bottom: 1px solid #bdbdbd; }
.box { flex: 1; min-width: 0; width: 100%; height: 18px; border: 1px solid #aaa; background: #fff; padding: 0 2px; font: 7px/14px "Noto Sans", sans-serif; color: #222; }
.box::placeholder { color: #555; font-style: italic; opacity: 1; }
.line { flex: 1; min-width: 0; height: 14px; border: 1px solid #ddd; background: #fff; padding: 0 2px; }
.date { flex: none; width: 106px; }
.combo { position: relative; flex: 1; display: flex; }
.menu { position: absolute; z-index: 2; left: 0; right: 0; top: 18px; padding-bottom: 1px; border: 1px solid #888; background: #fff; font: 7px/13px "Noto Sans", sans-serif; color: #222; }
.menu li { padding-left: 6px; height: 12px; line-height: 12px; }
.menu li.hot { background: #e87538; color: #fde7d8; height: 13px; line-height: 13px; }
.cursor { position: absolute; z-index: 3; left: 50px; top: 12px; width: 9px; height: 14px; }
.sel { display: grid; align-items: center; height: 13px; border: 1px solid #ddd; background: #fff; }
.sel select, .sel svg { grid-area: 1 / 1; }
.sel select { appearance: none; padding-left: 2px; width: 100%; height: 11px; line-height: 11px; color: #222; }
.sel svg { justify-self: end; margin-right: 3px; pointer-events: none; }
.s88 { width: 88px; }
.s65 { width: 65px; }
.s61 { width: 62px; }
.s131 { width: 132px; }
.s31 { width: 31px; }
textarea { flex: 1; align-self: stretch; margin: 1px 0 2px; padding: 1px 2px; border: 1px solid #eee; border-top-color: #777; border-left-color: #777; background: #fff; resize: none; line-height: 11px; color: #777; }
.tall .field { padding-right: 3px; }
.form > .r23 .i12:last-child, .form > .r38 .i12:last-child { margin-right: 5px; }
.chips { display: flex; align-items: flex-start; padding: 1px; }
.chips input { flex: 1; min-width: 0; }
.r38 .chips { height: 34px; }
.chip { display: flex; align-items: center; gap: 4px; height: 14px; padding: 0 3px 0 2px; border: 1px solid #aaa; border-radius: 1px; background: #dedede; white-space: nowrap; }
.chip button { color: #d9583a; font: bold 8px/10px "DejaVu Sans", sans-serif; }
.actions { display: flex; justify-content: flex-end; gap: 4px; margin-top: 15px; }
.actions button { width: 100px; height: 14px; border: 1px solid #808080; border-radius: 2px; background: linear-gradient(#f4f4f4, #ececec 50%, #d6d6d6 52%, #d0d0d0); font: 7px/12px "Noto Sans", sans-serif; color: #111; }
```
